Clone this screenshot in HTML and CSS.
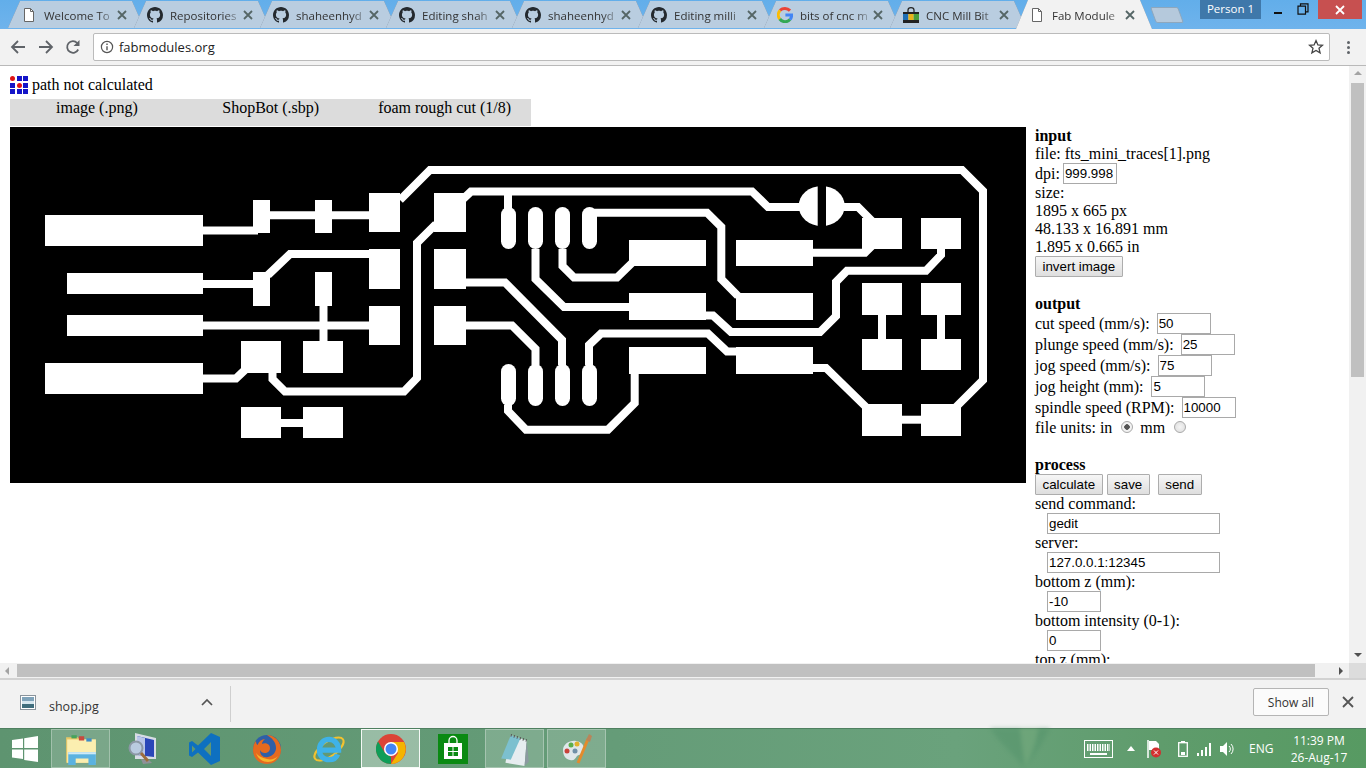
FILE: index.html
```html
<!DOCTYPE html>
<html lang="en">
<head>
<meta charset="utf-8">
<title>Fab Modules</title>
<link rel="stylesheet" href="styles.css">
</head>
<body>
<svg class="defs" width="0" height="0" aria-hidden="true">
  <symbol id="gh" viewBox="0 0 16 16"><path fill="#24292e" d="M8 0C3.58 0 0 3.58 0 8c0 3.54 2.29 6.53 5.47 7.59.4.07.55-.17.55-.38 0-.19-.01-.82-.01-1.49-2.01.37-2.53-.49-2.69-.94-.09-.23-.48-.94-.82-1.13-.28-.15-.68-.52-.01-.53.63-.01 1.08.58 1.23.82.72 1.21 1.87.87 2.33.66.07-.52.28-.87.51-1.07-1.78-.2-3.64-.89-3.64-3.95 0-.87.31-1.59.82-2.15-.08-.2-.36-1.02.08-2.12 0 0 .67-.21 2.2.82.64-.18 1.32-.27 2-.27.68 0 1.36.09 2 .27 1.53-1.04 2.2-.82 2.2-.82.44 1.1.16 1.92.08 2.12.51.56.82 1.27.82 2.15 0 3.07-1.87 3.75-3.65 3.95.29.25.54.73.54 1.48 0 1.07-.01 1.93-.01 2.2 0 .21.15.46.55.38A8.013 8.013 0 0016 8c0-4.42-3.58-8-8-8z"/></symbol>
  <symbol id="doc" viewBox="0 0 16 16"><path fill="#fff" stroke="#666" d="M3.5 1.5h6l3 3v10h-9z"/><path fill="none" stroke="#666" d="M9.5 1.5v3h3"/></symbol>
  <symbol id="cl" viewBox="0 0 10 10"><path fill="none" stroke="#566" stroke-width="1.8" d="M1 1l8 8M9 1l-8 8"/></symbol>
</svg>

<header class="tabstrip">
  <div class="tabs">
    <div class="tab"><svg class="fav"><use href="#doc"/></svg><span class="tt">Welcome To</span><svg class="tx"><use href="#cl"/></svg></div>
    <div class="tab"><svg class="fav"><use href="#gh"/></svg><span class="tt">Repositories</span><svg class="tx"><use href="#cl"/></svg></div>
    <div class="tab"><svg class="fav"><use href="#gh"/></svg><span class="tt">shaheenhyd</span><svg class="tx"><use href="#cl"/></svg></div>
    <div class="tab"><svg class="fav"><use href="#gh"/></svg><span class="tt">Editing shah</span><svg class="tx"><use href="#cl"/></svg></div>
    <div class="tab"><svg class="fav"><use href="#gh"/></svg><span class="tt">shaheenhyd</span><svg class="tx"><use href="#cl"/></svg></div>
    <div class="tab"><svg class="fav"><use href="#gh"/></svg><span class="tt">Editing milli</span><svg class="tx"><use href="#cl"/></svg></div>
    <div class="tab"><svg class="fav" viewBox="0 0 16 16"><path fill="none" stroke="#ea4335" stroke-width="3" d="M13 3.6A7 6.6 0 0 0 3 3.4"/><path fill="none" stroke="#fbbc05" stroke-width="3" d="M3 3.4A6.6 6.6 0 0 0 2.8 12"/><path fill="none" stroke="#34a853" stroke-width="3" d="M2.8 12A6.6 6.6 0 0 0 13 12.6"/><path fill="none" stroke="#4285f4" stroke-width="3" d="M13 12.6A6.6 6.6 0 0 0 14.6 8H8.4"/></svg><span class="tt">bits of cnc m</span><svg class="tx"><use href="#cl"/></svg></div>
    <div class="tab"><svg class="fav" viewBox="0 0 16 16"><path fill="none" stroke="#222" stroke-width="1.2" d="M5 5V3a3 2.4 0 0 1 6 0v2"/><rect y="5" width="16" height="2" fill="#222"/><rect y="7" width="5.4" height="6" fill="#1f6fb5"/><rect x="5.4" y="7" width="5.3" height="6" fill="#e9b31a"/><rect x="10.7" y="7" width="5.3" height="6" fill="#4a9e3b"/><rect y="13" width="16" height="3" fill="#222"/></svg><span class="tt">CNC Mill Bit</span><svg class="tx"><use href="#cl"/></svg></div>
    <div class="tab active"><svg class="fav"><use href="#doc"/></svg><span class="tt">Fab Module</span><svg class="tx"><use href="#cl"/></svg></div>
  </div>
  <div class="newtab"></div>
  <div class="winctl">
    <div class="person">Person 1</div>
    <svg class="wmin" width="10" height="10" viewBox="0 0 10 10"><rect x="1" y="7" width="8" height="2" fill="#111"/></svg>
    <svg class="wres" width="12" height="12" viewBox="0 0 12 12"><path fill="none" stroke="#111" stroke-width="1.2" d="M3.5 3V.8h7.5v8H8.5M1 3.2h7.5v8H1z"/></svg>
    <div class="wclose"><svg width="10" height="10" viewBox="0 0 10 10"><path fill="none" stroke="#fff" stroke-width="1.8" d="M1 1l8 8M9 1l-8 8"/></svg></div>
  </div>
</header>

<nav class="toolbar">
  <svg class="tb-ic back" width="16" height="16" viewBox="0 0 16 16"><path fill="none" stroke="#5f6368" stroke-width="1.8" d="M15 8H2M8 2L2 8l6 6"/></svg>
  <svg class="tb-ic fwd" width="16" height="16" viewBox="0 0 16 16"><path fill="none" stroke="#5f6368" stroke-width="1.8" d="M1 8h13M8 2l6 6-6 6"/></svg>
  <svg class="tb-ic rel" width="16" height="16" viewBox="0 0 16 16"><path fill="none" stroke="#5f6368" stroke-width="1.8" d="M13.2 10.5A5.8 5.8 0 1 1 12.2 4"/><path fill="#5f6368" d="M14.5 1v6h-6z"/></svg>
  <div class="omni">
    <svg class="info" width="14" height="14" viewBox="0 0 14 14"><circle cx="7" cy="7" r="5.6" fill="none" stroke="#555" stroke-width="1.2"/><path stroke="#555" stroke-width="1.4" d="M7 6.2v4M7 3.6v1.5"/></svg>
    <span class="url">fabmodules.org</span>
    <svg class="star" width="16" height="16" viewBox="0 0 16 16"><path fill="none" stroke="#444" stroke-width="1.3" d="M8 1.6l1.9 4.3 4.6.4-3.5 3 1.1 4.6L8 11.5l-4.1 2.4L5 9.3l-3.5-3 4.6-.4z"/></svg>
  </div>
  <div class="dots"><i></i><i></i><i></i></div>
</nav>

<main class="viewport">
  <div class="view-row">
    <div class="page">
      <div class="status">
        <div class="logo"><i class="r"></i><i></i><i></i><i></i><i class="r"></i><i></i><i></i><i></i><i></i></div>
        <span>path not calculated</span>
      </div>
      <div class="menus"><span class="m1">image (.png)</span><span class="m2">ShopBot (.sbp)</span><span class="m3">foam rough cut (1/8)</span></div>
      <div class="work">
        <svg class="pcb" width="1016" height="356" viewBox="10 127 1016 356">
          <rect class="bg" x="10" y="127" width="1016" height="356"/>
          <g class="pads">
            <rect x="45" y="215" width="158" height="31"/><rect x="67" y="273" width="136" height="21"/><rect x="67" y="315" width="136" height="21"/><rect x="45" y="363" width="158" height="31"/>
            <rect x="253" y="200" width="17" height="33"/><rect x="315" y="200" width="17" height="33"/><rect x="253" y="272" width="17" height="34"/><rect x="315" y="272" width="17" height="34"/>
            <rect x="369" y="193" width="31" height="39"/><rect x="369" y="249" width="31" height="40"/><rect x="369" y="306" width="31" height="39"/>
            <rect x="434" y="193" width="32" height="39"/><rect x="434" y="249" width="32" height="40"/><rect x="434" y="306" width="32" height="39"/>
            <rect x="241" y="341" width="40" height="32"/><rect x="303" y="341" width="40" height="32"/><rect x="241" y="407" width="40" height="31"/><rect x="303" y="407" width="40" height="31"/>
            <rect x="629" y="240" width="77" height="26"/><rect x="629" y="293" width="77" height="27"/><rect x="629" y="347" width="77" height="27"/>
            <rect x="736" y="240" width="77" height="26"/><rect x="736" y="293" width="77" height="27"/><rect x="736" y="347" width="77" height="27"/>
            <rect x="862" y="218" width="40" height="31"/><rect x="921" y="218" width="40" height="31"/><rect x="862" y="283" width="40" height="32"/><rect x="921" y="283" width="40" height="32"/><rect x="862" y="339" width="40" height="31"/><rect x="921" y="339" width="40" height="31"/><rect x="862" y="404" width="40" height="32"/><rect x="921" y="404" width="40" height="32"/>
            <rect x="501" y="207" width="15" height="42" rx="7.5"/><rect x="528" y="207" width="15" height="42" rx="7.5"/><rect x="555" y="207" width="15" height="42" rx="7.5"/><rect x="582" y="207" width="15" height="42" rx="7.5"/>
            <rect x="501" y="364" width="15" height="42" rx="7.5"/><rect x="528" y="364" width="15" height="42" rx="7.5"/><rect x="555" y="364" width="15" height="42" rx="7.5"/><rect x="582" y="364" width="15" height="42" rx="7.5"/>
            <ellipse cx="821.7" cy="206" rx="23" ry="20"/>
          </g>
          <rect class="bg" x="817.7" y="184" width="8.3" height="44"/>
          <g class="traces">
            <path d="M203 230.5H258"/><path d="M270 215.3H369"/>
            <path d="M400 200L430 170H962L983 191V380L955 408"/>
            <path d="M203 284H253"/><path d="M268 275L290 254H369"/>
            <path d="M323.5 306V341"/><path d="M203 325.5H369"/>
            <path d="M203 378.5H236L247 368"/>
            <path d="M272.5 373V379L285 391.5H404L417 378V243L436 224"/>
            <path d="M281 423H303"/>
            <path d="M462 200L471 191.5H752L768 207H800"/><path d="M508 191V210"/>
            <path d="M590 212.7H707L721.3 227V279L738 296"/>
            <path d="M562.5 249V266L574 277.5H617L634 261"/>
            <path d="M535.5 249V279L564 307H629"/>
            <path d="M466 282.5H505L562 340V365"/>
            <path d="M466 325.5H512L535.5 349V365"/>
            <path d="M589 365V345L601 333.5H708L727 351.5H738"/>
            <path d="M706 315.5H713L731 332H820L836 316V282L847 270.7H926L941 255V248"/>
            <path d="M813 252.7H865L875 243"/>
            <path d="M844 207H858L872 221"/>
            <path d="M882 315V339"/><path d="M941 315V339"/><path d="M902 419.7H921"/>
            <path d="M813 368H826L866 407"/>
            <path d="M508 405V411L526 429.7H608L634.7 403V372"/>
          </g>
        </svg>
        <aside class="panel">
          <div class="ln"><b>input</b></div>
          <div class="ln">file: fts_mini_traces[1].png</div>
          <div class="fl">dpi: <input class="in back1" value="999.998"></div>
          <div class="ln">size:</div>
          <div class="ln">1895 x 665 px</div>
          <div class="ln">48.133 x 16.891 mm</div>
          <div class="ln">1.895 x 0.665 in</div>
          <div class="fl"><button class="btn">invert image</button></div>
          <div class="ln sec"><b>output</b></div>
          <div class="fl">cut speed (mm/s): <input class="in gap" value="50"></div>
          <div class="fl">plunge speed (mm/s): <input class="in gap" value="25"></div>
          <div class="fl">jog speed (mm/s): <input class="in gap" value="75"></div>
          <div class="fl">jog height (mm): <input class="in gap4" value="5"></div>
          <div class="fl">spindle speed (RPM): <input class="in gap" value="10000"></div>
          <div class="ln units">file units: in <input class="rad" type="radio" name="u" checked> mm <input class="rad" type="radio" name="u"></div>
          <div class="ln sec2"><b>process</b></div>
          <div class="fl btns"><button class="btn">calculate</button><button class="btn">save</button><button class="btn s3">send</button></div>
          <div class="ln">send command:</div>
          <div class="fl ind"><input class="in wide" value="gedit"></div>
          <div class="ln">server:</div>
          <div class="fl ind"><input class="in wide" value="127.0.0.1:12345"></div>
          <div class="ln">bottom z (mm):</div>
          <div class="fl ind"><input class="in" value="-10"></div>
          <div class="ln">bottom intensity (0-1):</div>
          <div class="fl ind"><input class="in" value="0"></div>
          <div class="ln">top z (mm):</div>
        </aside>
      </div>
    </div>
    <div class="vscroll"><i class="ar up"></i><div class="vthumb"></div><i class="ar dn"></i></div>
  </div>
  <div class="hscroll"><i class="ar lf"></i><div class="hthumb"></div><i class="ar rt"></i><div class="corner"></div></div>
</main>

<section class="dlbar">
  <svg class="dl-ic" width="16" height="15" viewBox="0 0 16 15"><rect x=".5" y=".5" width="15" height="14" fill="#fff" stroke="#8a949c"/><rect x="2" y="2" width="12" height="4" fill="#7fa3ba"/><rect x="2" y="6" width="12" height="3" fill="#d5e6ee"/><rect x="2" y="9" width="12" height="4" fill="#3f6d7c"/></svg>
  <span class="dl-name">shop.jpg</span>
  <svg class="dl-chev" width="12" height="8" viewBox="0 0 12 8"><path fill="none" stroke="#555" stroke-width="1.7" d="M1 7l5-5 5 5"/></svg>
  <div class="dl-sep"></div>
  <button class="showall">Show all</button>
  <svg class="dl-x" width="12" height="12" viewBox="0 0 12 12"><path fill="none" stroke="#555" stroke-width="1.8" d="M1 1l10 10M11 1L1 11"/></svg>
</section>

<footer class="taskbar">
  <svg class="leaf" width="70" height="40" viewBox="0 0 70 40"><path fill="#4f8f68" d="M5 0h60C58 14 48 30 40 40 28 26 14 14 5 0z"/><path fill="#79ad7f" d="M35 0h18C52 14 46 28 40 40 38 24 36 12 35 0z"/></svg>
  <svg class="start" width="26" height="26" viewBox="0 0 26 26"><path fill="#fff" d="M0 4l11-1.6V12H0zM12.2 2.200L26 0v12H12.200zM0 13.400h11V23L0 21.600zM12.200 13.400H26V26l-13.800-2z"/></svg>
  <div class="tasks">
    <div class="task on">
      <svg width="34" height="32" viewBox="0 0 32 30"><path fill="#e8c766" d="M2 4h11l2 2h15v22H2z"/><rect x="3" y="6" width="27" height="22" fill="#fbeeb0"/><rect x="7" y="2" width="5" height="3" fill="#46a35b"/><rect x="14" y="3" width="5" height="4" fill="#c8493e"/><rect x="21" y="5" width="5" height="3" fill="#3f8cc6"/><path fill="#5bb2e0" d="M4 18h26v12h-7v-6H11v6H4z"/><path fill="#cfeaf7" d="M4 18h26v2H4z"/></svg>
    </div>
    <div class="task">
      <svg width="32" height="34" viewBox="0 0 32 34"><path fill="#d6dce4" d="M8 1l21 5v21L8 27z"/><path fill="#2a46b8" d="M10 4l17 4v17L10 23z"/><path fill="#b9c6e8" d="M10 4l8 2v18l-8-1z"/><path fill="#8f9198" d="M14 27l8 1 3 3-9 1z"/><circle cx="9" cy="16" r="6.500" fill="#b9cbe0" stroke="#8b97a5" stroke-width="2"/><path stroke="#9c6d3c" stroke-width="3" d="M14 21l7 8"/></svg>
    </div>
    <div class="task">
      <svg width="31" height="32" viewBox="0 0 31 32"><path fill="#0e70c0" d="M22 0l9 4v24l-9 4L9 19.500 3 24l-3-1.500v-13L3 8l6 4.500zM22 9l-7 7 7 7zM3 12.500v7l3.500-3.500z"/></svg>
    </div>
    <div class="task">
      <svg width="32" height="32" viewBox="0 0 32 32"><circle cx="16" cy="16" r="14" fill="#2f5fa8"/><path fill="#e66a1f" d="M16 2C24 2 30 9 30 17c0 8-6.500 14-14 14C8 31 2 25 2 17c0-4 1-7 3-9 0 2 .5 3 1.500 4C8 8 11 6 14 6c-2 2-3 3-3 5 2-1 5-1 7 1 2 3 1 7-3 8-3 .5-5-1-6-3 0 5 3 8 8 7 5-1 8-5 8-9 0-6-4-10-9-13z"/><path fill="#f7b52c" d="M5 20c2 6 7 9 12 9 5 0 8-3 10-6-3 3-7 4-11 3-5-1-9-3-11-6z"/></svg>
    </div>
    <div class="task">
      <svg width="34" height="34" viewBox="0 0 32 32"><ellipse cx="16" cy="16" rx="16" ry="7" fill="none" stroke="#f2c230" stroke-width="2" transform="rotate(-35 16 16)"/><path fill="none" stroke="#3fb2e8" stroke-width="5" d="M7 17h18c0-6-4-10-9-10s-9 4-9 10 4 9 9 9c4 0 7-2 8-5"/></svg>
    </div>
    <div class="task lit">
      <svg width="30" height="30" viewBox="0 0 30 30"><circle cx="15" cy="15" r="15" fill="#db4437"/><path fill="#0f9d58" d="M15 30A15 15 0 0 1 2 7.500L9 19l6 4z"/><path fill="#f4b400" d="M15 8h13a15 15 0 0 1-13 22l7-11z"/><circle cx="15" cy="15" r="7" fill="#fff"/><circle cx="15" cy="15" r="5.500" fill="#4285f4"/></svg>
    </div>
    <div class="task plain">
      <svg width="30" height="30" viewBox="0 0 30 30"><rect width="30" height="30" fill="#0a8a12"/><path fill="none" stroke="#fff" stroke-width="1.300" d="M11 9V6.500a4 4 0 0 1 8 0V9"/><rect x="6" y="9" width="18" height="16" fill="#fff"/><path fill="#0a8a12" d="M10 13h4.500v4H10zM15.500 13H20v4h-4.500zM10 18h4.500v4H10zM15.500 18H20v4h-4.500z"/></svg>
    </div>
    <div class="task on">
      <svg width="32" height="34" viewBox="0 0 30 32"><path fill="#e7edf0" d="M11 3l15 5-2 24-18-3z"/><path fill="#8b9aa0" d="M26 8l2 20-4 4z"/><path fill="#7cc0cf" d="M11 3l9 3-9 20-9-1z"/><path stroke="#555" stroke-dasharray="1 2" stroke-width="2.500" d="M11 3l15 5"/></svg>
    </div>
    <div class="task on">
      <svg width="32" height="32" viewBox="0 0 32 32"><path fill="#dfe7ea" d="M2 17c0-6 7-10 13-9 6 1 9 5 8 10-1 5-5 3-7 5-2 3-3 5-7 4-5-1-7-5-7-10z"/><circle cx="6" cy="18" r="2.500" fill="#c9423a"/><circle cx="10" cy="12" r="2.500" fill="#5cae4a"/><circle cx="16" cy="11" r="2.500" fill="#e3b12c"/><circle cx="14" cy="18" r="2.500" fill="#7090a8"/><path stroke="#e28b2d" stroke-width="3" d="M27 6L17 30"/><path fill="#b9855a" d="M25 7l3-6 3 2-2 6z"/></svg>
    </div>
  </div>
  <div class="tray">
    <svg class="t-kb" width="29" height="18" viewBox="0 0 29 18"><rect x=".5" y=".5" width="28" height="17" fill="none" stroke="#fff"/><path stroke="#fff" stroke-width="7" stroke-dasharray="1.500 1" d="M3 7.500h23"/><path stroke="#fff" stroke-width="2" d="M6 14h17"/></svg>
    <svg class="t-up" width="8" height="5" viewBox="0 0 8 5"><path fill="#fff" d="M4 0l4 5H0z"/></svg>
    <svg class="t-flag" width="16" height="18" viewBox="0 0 16 18"><path stroke="#fff" stroke-width="1.500" d="M2 0v18"/><path fill="#fff" d="M3 1h7l3 3v6H3z"/><circle cx="10" cy="12.500" r="5" fill="#d22f2f"/><path stroke="#fff" d="M8 10.500l4 4M12 10.500l-4 4"/></svg>
    <svg class="t-bat" width="10" height="16" viewBox="0 0 10 16"><rect x=".7" y="1.700" width="8.600" height="13.600" fill="none" stroke="#fff" stroke-width="1.300"/><rect x="3" y="0" width="4" height="2" fill="#fff"/><rect x="3" y="11" width="4" height="3" fill="#fff"/></svg>
    <svg class="t-sig" width="16" height="14" viewBox="0 0 16 14"><path fill="#fff" d="M1 11h2v3H1zM5 8h2v6H5zM9 5h2v9H9zM13 1h2v13h-2z"/></svg>
    <svg class="t-spk" width="14" height="16" viewBox="0 0 14 16"><path fill="#fff" d="M0 5h3l4-4v14l-4-4H0z"/><path fill="none" stroke="#fff" d="M9 5a4 4 0 0 1 0 6M11 3a7 7 0 0 1 0 10"/></svg>
    <span class="t-eng">ENG</span>
    <div class="t-clock"><span>11:39 PM</span><span>26-Aug-17</span></div>
  </div>
</footer>
</body>
</html>
```
FILE: styles.css
```css
* { box-sizing: border-box; }
html, body { margin: 0; padding: 0; }
body { width: 1366px; height: 768px; overflow: hidden; display: flex; flex-direction: column; font-family: "Liberation Serif", serif; background: #fff; }
.defs { position: absolute; }

/* tab strip */
.tabstrip { height: 29px; flex: none; display: flex; background: linear-gradient(#62aeea, #6fb3ec); font-family: "Open Sans", sans-serif; }
.tabs { display: flex; padding-left: 8px; }
.tab { position: relative; width: 136px; height: 29px; margin-right: -10px; padding: 1px 0 0 13px; display: flex; align-items: center; filter: drop-shadow(0 0 .6px #71808f); }
.tab::before { content: ""; position: absolute; inset: 1px 0 1px; background: #b9cde0; clip-path: polygon(0 100%, 12px 0, calc(100% - 12px) 0, 100% 100%); }
.tab.active { z-index: 2; }
.tab.active::before { inset: 0 0 0; background: #f2f2f2; }
.fav { position: relative; width: 16px; height: 16px; flex: none; margin-right: 7px; }
.tt { position: relative; width: 70px; flex: none; overflow: hidden; white-space: nowrap; font-size: 11.5px; color: #333; -webkit-mask-image: linear-gradient(90deg, #000 78%, rgba(0,0,0,.25) 98%); mask-image: linear-gradient(90deg, #000 78%, rgba(0,0,0,.25) 98%); }
.tx { position: relative; width: 10px; height: 10px; flex: none; margin-left: 3px; }
.newtab { width: 28px; height: 16px; margin: 7px 0 0 11px; flex: none; background: #b5c9dc; border: 1px solid #8ea7bd; border-radius: 2px; transform: skewX(20deg); }
.winctl { margin-left: auto; display: flex; align-items: flex-start; padding-right: 4px; }
.person { width: 61px; height: 19px; background: #3f78aa; color: #fff; font-size: 11.5px; line-height: 17px; text-align: center; }
.wmin { margin: 5px 0 0 12px; }
.wres { margin: 3px 0 0 14px; }
.wclose { width: 44px; height: 19px; margin-left: 9px; background: #c75050; display: flex; align-items: center; justify-content: center; }

/* toolbar */
.toolbar { height: 37px; flex: none; display: flex; align-items: center; background: #f2f2f2; border-bottom: 1px solid #b9b9b9; font-family: "Open Sans", sans-serif; }
.tb-ic { flex: none; }
.back { margin-left: 10px; }
.fwd { margin-left: 12px; }
.rel { margin-left: 11px; }
.omni { width: 1237px; height: 28px; margin: -1px 0 0 12px; background: #fff; border: 1px solid #bbb; border-radius: 2px; display: flex; align-items: center; }
.info { margin-left: 6px; }
.url { margin-left: 5px; font-size: 13px; color: #222; }
.star { margin-left: auto; margin-right: 5px; }
.dots { margin-left: 17px; display: flex; flex-direction: column; gap: 2px; }
.dots i { display: block; width: 3px; height: 3px; background: #5f6368; border-radius: 50%; }

/* viewport */
.viewport { height: 612px; flex: none; display: flex; flex-direction: column; }
.view-row { height: 597px; display: flex; }
.page { flex: 1; min-width: 0; overflow: hidden; padding: 10px 0 0 10px; font-size: 16px; line-height: 18px; color: #000; }
.status { height: 23px; display: flex; align-items: flex-start; }
.status span { margin: 0 0 0 4px; }
.logo { width: 18px; height: 18px; display: grid; grid-template-columns: repeat(3, 5px); grid-auto-rows: 5px; gap: 1.5px; }
.logo i { background: #1414c8; }
.logo .r { background: #e01414; border-radius: 50%; }
.menus { width: 521px; height: 27px; background: #dcdcdc; padding: 0 0 0 46px; white-space: nowrap; line-height: 18px; }
.m2 { margin-left: 84.5px; }
.m3 { margin-left: 59px; }
.work { margin-top: 1px; display: flex; align-items: flex-start; }
.pcb { flex: none; display: block; }
.bg { fill: #000; }
.pads { fill: #fff; }
.traces { fill: none; stroke: #fff; stroke-width: 8; }
.panel { margin-left: 9px; width: 300px; flex: none; }
.ln { height: 18px; line-height: 18px; white-space: nowrap; }
.units { line-height: 20px; }
.fl { height: 21px; line-height: 21px; white-space: nowrap; }
.sec { margin-top: 18px; }
.sec2 { margin-top: 20px; }
.ind { padding-left: 12px; }
.in { width: 54px; height: 21px; padding: 1px; margin: 0; border: 1px solid #a9a9a9; font: 13.33px "Liberation Sans", sans-serif; color: #000; vertical-align: top; outline: 0; background: #fff; }
.wide { width: 173px; }
.gap { margin-left: 3px; }
.gap4 { margin-left: 4px; }
.back1 { margin-left: -1px; }
.btn { height: 21px; padding: 0 6.5px; margin: 0; border: 1px solid #adadad; border-radius: 1px; background: linear-gradient(#f6f6f6, #dedede); font: 13.33px "Liberation Sans", sans-serif; color: #000; vertical-align: top; }
.btns .btn { margin-right: 4px; }
.btns .s3 { margin-left: 4px; }
.rad { appearance: none; -webkit-appearance: none; width: 12px; height: 12px; margin: 3px 3px 0 5px; vertical-align: top; border: 1px solid #a9a9a9; border-radius: 50%; background: radial-gradient(circle, #f4f4f4 0, #dcdcdc 100%); }
.rad:checked { background: radial-gradient(circle, #555 0 2.5px, #f2f2f2 3px); }

/* scrollbars */
.vscroll { width: 17px; flex: none; background: #f1f1f1; display: flex; flex-direction: column; align-items: center; position: relative; padding-top: 17px; }
.vthumb { width: 13px; height: 294px; background: #c0c0c0; }
.hscroll { height: 15px; flex: none; background: #f1f1f1; position: relative; display: flex; align-items: center; padding-left: 17px; }
.hthumb { width: 1298px; height: 13px; background: #c0c0c0; }
.corner { position: absolute; right: 0; top: 0; width: 17px; height: 15px; background: #dcdcdc; }
.ar { position: absolute; width: 0; height: 0; border: 4px solid transparent; }
.up { top: 5px; left: 4.5px; border-bottom-color: #a3a3a3; border-top-width: 0; }
.dn { bottom: 6px; left: 4.5px; border-top-color: #505050; border-bottom-width: 0; }
.lf { left: 5px; top: 3.5px; border-right-color: #a3a3a3; border-left-width: 0; }
.rt { left: 1339px; top: 3.5px; border-left-color: #505050; border-right-width: 0; }

/* download bar */
.dlbar { height: 50px; flex: none; display: flex; align-items: center; background: #f2f2f2; border-top: 2px solid #d2d2d2; font-family: "Open Sans", sans-serif; }
.dl-ic { margin: -3px 0 0 20px; flex: none; }
.dl-name { margin: 5px 0 0 13px; width: 55px; font-size: 12.5px; color: #333; }
.dl-chev { margin: -4px 0 0 97px; flex: none; }
.dl-sep { width: 1px; height: 36px; margin-left: 17px; background: #cfcfcf; }
.showall { width: 76px; height: 28px; margin: -4px 0 0 1022px; padding: 0; border: 1px solid #b5b5b5; border-radius: 2px; background: #fbfbfb; font: 12px "Open Sans", sans-serif; color: #333; }
.dl-x { margin: -4px 0 0 13px; flex: none; }

/* taskbar */
.taskbar { height: 40px; flex: none; position: relative; display: flex; align-items: center; background: linear-gradient(90deg, #5e9470 0, #659c78 45%, #6aa27c 70%, #5f9c6c 85%, #579a62 100%); border-top: 1px solid #4f8060; }
.leaf { position: absolute; left: 985px; top: -1px; opacity: .4; filter: blur(2px); }
.start { margin-left: 12px; flex: none; position: relative; }
.tasks { margin-left: 13px; display: flex; gap: 3px; position: relative; }
.task { width: 59px; height: 39px; display: flex; align-items: center; justify-content: center; border: 1px solid transparent; }
.task.on { background: rgba(255,255,255,.17); border-color: rgba(255,255,255,.3); }
.task.lit { background: rgba(255,255,255,.35); border-color: rgba(255,255,255,.9); }
.tray { margin-left: auto; padding-right: 17px; display: flex; align-items: center; position: relative; color: #fff; font: 12px "Open Sans", sans-serif; }
.t-up { margin-left: 14px; }
.t-flag { margin-left: 11px; }
.t-bat { margin-left: 16px; }
.t-sig { margin-left: 8px; }
.t-spk { margin-left: 8px; }
.t-eng { margin-left: 15px; width: 24px; }
.t-clock { margin-left: 16px; padding-top: 1px; width: 60px; display: flex; flex-direction: column; align-items: center; line-height: 17px; white-space: nowrap; }
```
